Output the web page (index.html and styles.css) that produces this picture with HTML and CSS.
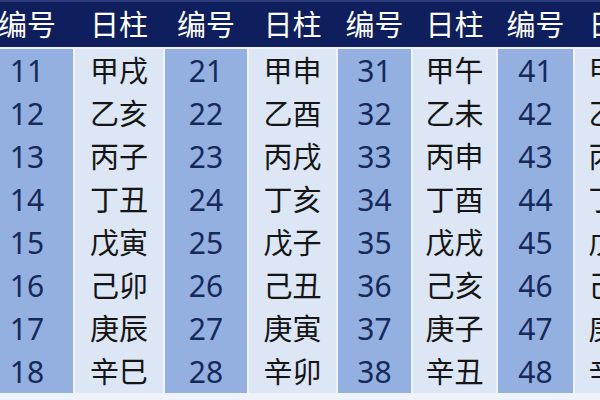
FILE: index.html
```html
<!DOCTYPE html>
<html lang="zh-CN">
<head>
<meta charset="utf-8">
<title>日柱编号表</title>
<link rel="stylesheet" href="styles.css">
</head>
<body>
<div class="table">
  <div class="head">
    <div class="hc">编号</div><div class="hc">日柱</div>
    <div class="hc">编号</div><div class="hc">日柱</div>
    <div class="hc">编号</div><div class="hc">日柱</div>
    <div class="hc">编号</div><div class="hc">日柱</div>
  </div>
  <div class="body">
    <div class="num">11</div><div class="gz">甲戌</div><div class="num">21</div><div class="gz">甲申</div><div class="num">31</div><div class="gz">甲午</div><div class="num">41</div><div class="gz">甲辰</div>
    <div class="num">12</div><div class="gz">乙亥</div><div class="num">22</div><div class="gz">乙酉</div><div class="num">32</div><div class="gz">乙未</div><div class="num">42</div><div class="gz">乙巳</div>
    <div class="num">13</div><div class="gz">丙子</div><div class="num">23</div><div class="gz">丙戌</div><div class="num">33</div><div class="gz">丙申</div><div class="num">43</div><div class="gz">丙午</div>
    <div class="num">14</div><div class="gz">丁丑</div><div class="num">24</div><div class="gz">丁亥</div><div class="num">34</div><div class="gz">丁酉</div><div class="num">44</div><div class="gz">丁未</div>
    <div class="num">15</div><div class="gz">戊寅</div><div class="num">25</div><div class="gz">戊子</div><div class="num">35</div><div class="gz">戊戌</div><div class="num">45</div><div class="gz">戊申</div>
    <div class="num">16</div><div class="gz">己卯</div><div class="num">26</div><div class="gz">己丑</div><div class="num">36</div><div class="gz">己亥</div><div class="num">46</div><div class="gz">己酉</div>
    <div class="num">17</div><div class="gz">庚辰</div><div class="num">27</div><div class="gz">庚寅</div><div class="num">37</div><div class="gz">庚子</div><div class="num">47</div><div class="gz">庚戌</div>
    <div class="num">18</div><div class="gz">辛巳</div><div class="num">28</div><div class="gz">辛卯</div><div class="num">38</div><div class="gz">辛丑</div><div class="num">48</div><div class="gz">辛亥</div>
  </div>
</div>
</body>
</html>
```
FILE: styles.css
```css
html, body {
  margin: 0;
  padding: 0;
  width: 600px;
  height: 400px;
  overflow: hidden;
  background: #eef3fb;
}
.table {
  margin-left: -19px;
  width: 700px;
  font-family: "Noto Sans CJK SC", "Noto Sans", sans-serif;
}
.head, .body {
  display: grid;
  grid-template-columns: 92px 88px 82px 87px 73px 83px 75px 85px;
  column-gap: 2px;
}
.head {
  height: 47px;
  background: #0f1e5c;
  border-top: 2px solid #2a3a7a;
  box-sizing: border-box;
  margin-bottom: 2px;
}
.hc {
  color: #ffffff;
  font-size: 29px;
  line-height: 43px;
  text-align: center;
}
.body {
  grid-auto-rows: 43px;
}
.num, .gz {
  font-size: 29px;
  line-height: 41px;
  text-align: center;
}
.num {
  background: #93b0e1;
  color: #15295a;
  font-family: "Noto Sans", "Open Sans", sans-serif;
  font-size: 30px;
  line-height: 43px;
}
.gz {
  background: #dce6f5;
  color: #151515;
}
```
